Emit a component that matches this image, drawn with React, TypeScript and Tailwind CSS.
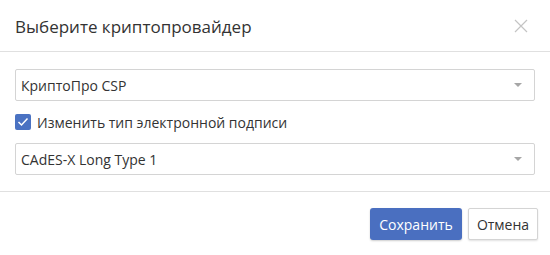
const Caret = () => (
  <svg width="8" height="4" viewBox="0 0 8 4" className="shrink-0">
    <path d="M0 0 L8 0 L4 4 Z" fill="#a6a6a6" />
  </svg>
);

const Select = ({ value }: { value: string }) => (
  <div className="flex items-center justify-between h-[32px] border border-[#d4d4d4] rounded-[2px] pl-[5px] pr-[12px] bg-white">
    <span>{value}</span>
    <Caret />
  </div>
);

export default function App() {
  return (
    <div className="w-[550px] h-[255px] bg-white text-[#333] font-['Open_Sans',sans-serif] text-[14px]">
      <div className="flex items-center justify-between h-[52px] px-[15px] border-b border-[#e0e0e0]">
        <h1 className="text-[17px] text-[#333] leading-none mt-[1px]">Выберите криптопровайдер</h1>
        <svg width="14" height="14" viewBox="0 0 14 14" className="mr-[7px]">
          <path d="M1 1 L13 13 M13 1 L1 13" stroke="#c4c4c4" strokeWidth="1.2" />
        </svg>
      </div>

      <div className="px-[15px] pt-[17px] pb-[16px] border-b border-[#e0e0e0]">
        <Select value="КриптоПро CSP" />
        <label className="flex items-center gap-[6px] h-[42px]">
          <span className="flex items-center justify-center w-[16px] h-[16px] rounded-[2px] bg-[#4a72c2]">
            <svg width="12" height="10" viewBox="0 0 12 10">
              <path d="M1.5 5 L4.5 8 L10.5 1.5" stroke="white" strokeWidth="1.5" fill="none" />
            </svg>
          </span>
          <span>Изменить тип электронной подписи</span>
        </label>
        <Select value="CAdES-X Long Type 1" />
      </div>

      <div className="flex justify-end gap-[6px] px-[12px] pt-[16px]">
        <button className="h-[32px] w-[92px] rounded-[3px] bg-[#4a6fc0] text-white text-[14px] shadow-[0_1px_2px_rgba(0,0,0,0.2)]">
          Сохранить
        </button>
        <button className="h-[32px] w-[70px] rounded-[2px] bg-white border border-[#d4d4d4] text-[#333] text-[14px] shadow-[0_1px_2px_rgba(0,0,0,0.12)]">
          Отмена
        </button>
      </div>
    </div>
  );
}
